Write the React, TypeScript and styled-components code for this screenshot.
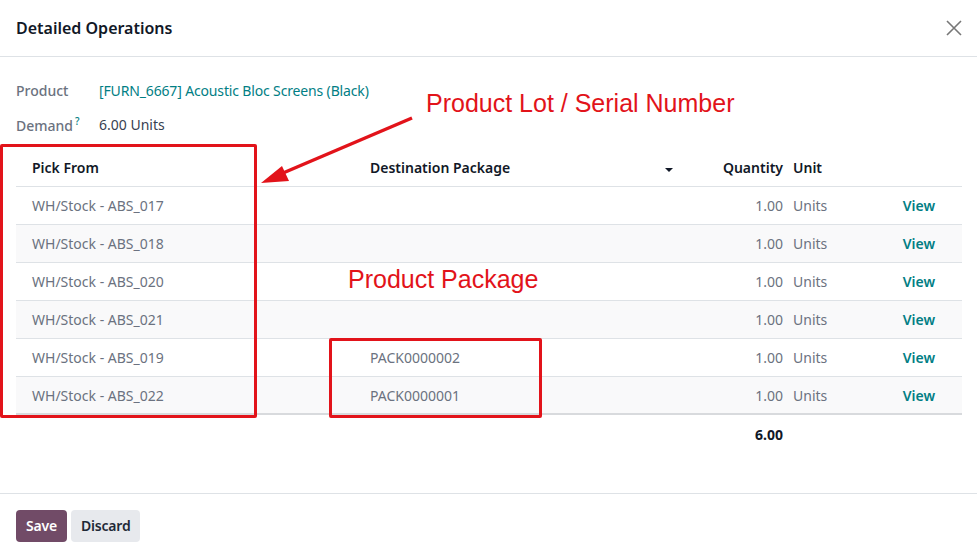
import React from "react";
import styled, { createGlobalStyle } from "styled-components";

const Global = createGlobalStyle`
  body {
    margin: 0;
    background: #fff;
    font-family: "Noto Sans", "Open Sans", sans-serif;
  }
`

const Dialog = styled.div`
  position: relative;
  width: 977px;
  height: 557px;
  display: flex;
  flex-direction: column;
  background: #fff;
  color: #374151;
`
const Header = styled.div`
  height: 57px;
  box-sizing: border-box;
  border-bottom: 1px solid #dee2e6;
  display: flex;
  align-items: center;
  justify-content: space-between;
  padding: 0 15px 0 16px;
  > h1 {
    margin: 0;
    font-size: 16px;
    font-weight: 600;
    color: #111827;
  }
`
const Close = styled.button`
  border: none;
  background: none;
  padding: 0;
  width: 16px;
  height: 16px;
  display: flex;
  cursor: pointer;
`
const Body = styled.div`
  flex: 1;
  padding: 16px 15px 0 16px;
`
const Field = styled.div`
  display: flex;
  align-items: center;
  height: 34px;
  font-size: 14px;
  > label {
    width: 83px;
    color: #6b7280;
    font-weight: 500;
    sup {
      color: #017e84;
      font-size: 10px;
      margin-left: 2px;
    }
  }
`
const Value = styled.span<{ $link?: boolean }>`
  color: ${p => (p.$link ? "#017e84" : "#374151")};
  letter-spacing: ${p => (p.$link ? "-0.15px" : "0")};
`
const Table = styled.div`
  margin-top: 8px;
  font-size: 14px;
`
const Row = styled.div<{ $head?: boolean; $striped?: boolean; $last?: boolean }>`
  display: grid;
  grid-template-columns: 338px 331px 100px 1fr 100px;
  align-items: center;
  height: 38px;
  box-sizing: border-box;
  border-bottom: ${p => (p.$last ? "2px solid #d8dadd" : "1px solid #dee2e6")};
  background: ${p => (p.$striped ? "#f9f9fa" : "transparent")};
  color: ${p => (p.$head ? "#111827" : "#6b7280")};
  font-weight: ${p => (p.$head ? 600 : 400)};
`
const Cell = styled.div<{ $right?: boolean }>`
  padding: 0 ${p => (p.$right ? "2px" : "16px")} 0 16px;
  text-align: ${p => (p.$right ? "right" : "left")};
  display: flex;
  align-items: center;
  justify-content: ${p => (p.$right ? "flex-end" : "flex-start")};
`
const SortCell = styled(Cell)`
  justify-content: space-between;
  padding-right: 12px;
`
const Caret = styled.span`
  width: 0;
  height: 0;
  border-left: 4px solid transparent;
  border-right: 4px solid transparent;
  border-top: 4px solid #111827;
  margin-top: 4px;
`
const UnitCell = styled.div`
  padding-left: 8px;
`
const ViewLink = styled.a`
  color: #017e84;
  font-weight: 600;
  text-align: right;
  padding-right: 27px;
  cursor: pointer;
`
const TotalRow = styled.div`
  display: grid;
  grid-template-columns: 338px 331px 100px 1fr 100px;
  height: 38px;
  align-items: center;
  font-size: 14px;
  font-weight: 700;
  color: #111827;
`
const Footer = styled.div`
  height: 64px;
  box-sizing: border-box;
  border-top: 1px solid #dee2e6;
  display: flex;
  align-items: center;
  gap: 4px;
  padding: 0 16px;
`
const Button = styled.button<{ $primary?: boolean }>`
  border: none;
  border-radius: 4px;
  height: 32px;
  padding: 0 10px;
  font-family: inherit;
  font-size: 14px;
  font-weight: 600;
  letter-spacing: -0.2px;
  color: ${p => (p.$primary ? "#fff" : "#1f2937")};
  background: ${p => (p.$primary ? "#714b67" : "#e7e9ed")};
`
const Note = styled.div<{ $x: number; $y: number }>`
  position: absolute;
  left: ${p => p.$x}px;
  top: ${p => p.$y}px;
  font-family: "Liberation Sans", Arial, sans-serif;
  font-size: 25px;
  color: #e2131a;
  white-space: nowrap;
`
const Frame = styled.div<{ $x: number; $y: number; $w: number; $h: number }>`
  position: absolute;
  left: ${p => p.$x}px;
  top: ${p => p.$y}px;
  width: ${p => p.$w}px;
  height: ${p => p.$h}px;
  box-sizing: border-box;
  border: 3px solid #e2131a;
  border-radius: 2px;
`
const Arrow = styled.svg`
  position: absolute;
  left: 0;
  top: 0;
  pointer-events: none;
`

const lines = [
  { lot: "WH/Stock - ABS_017", pack: "" },
  { lot: "WH/Stock - ABS_018", pack: "" },
  { lot: "WH/Stock - ABS_020", pack: "" },
  { lot: "WH/Stock - ABS_021", pack: "" },
  { lot: "WH/Stock - ABS_019", pack: "PACK0000002" },
  { lot: "WH/Stock - ABS_022", pack: "PACK0000001" },
]

function App() {
  return (
    <Dialog>
      <Global />
      <Header>
        <h1>Detailed Operations</h1>
        <Close aria-label="Close">
          <svg width="16" height="16" viewBox="0 0 16 16">
            <path d="M1 1 L15 15 M15 1 L1 15" stroke="#777" strokeWidth="1.6" />
          </svg>
        </Close>
      </Header>
      <Body>
        <Field>
          <label>Product</label>
          <Value $link>[FURN_6667] Acoustic Bloc Screens (Black)</Value>
        </Field>
        <Field>
          <label>Demand<sup>?</sup></label>
          <Value>6.00 Units</Value>
        </Field>
        <Table>
          <Row $head>
            <Cell>Pick From</Cell>
            <SortCell>Destination Package<Caret /></SortCell>
            <Cell $right>Quantity</Cell>
            <UnitCell>Unit</UnitCell>
            <div />
          </Row>
          {lines.map((l, i) => (
            <Row key={l.lot} $striped={i % 2 === 1} $last={i === lines.length - 1}>
              <Cell>{l.lot}</Cell>
              <Cell>{l.pack}</Cell>
              <Cell $right>1.00</Cell>
              <UnitCell>Units</UnitCell>
              <ViewLink>View</ViewLink>
            </Row>
          ))}
          <TotalRow>
            <div />
            <div />
            <Cell $right>6.00</Cell>
          </TotalRow>
        </Table>
      </Body>
      <Footer>
        <Button $primary>Save</Button>
        <Button>Discard</Button>
      </Footer>

      <Note $x={426} $y={89}>Product Lot / Serial Number</Note>
      <Note $x={348} $y={265}>Product Package</Note>
      <Frame $x={0} $y={144} $w={257} $h={274} />
      <Frame $x={329} $y={338} $w={213} $h={80} />
      <Arrow width="977" height="557">
        <line x1="412" y1="118" x2="276" y2="176" stroke="#e2131a" strokeWidth="3.5" />
        <polygon points="261,183 282,166 289,181" fill="#e2131a" />
      </Arrow>
    </Dialog>
  );
}

export default App
